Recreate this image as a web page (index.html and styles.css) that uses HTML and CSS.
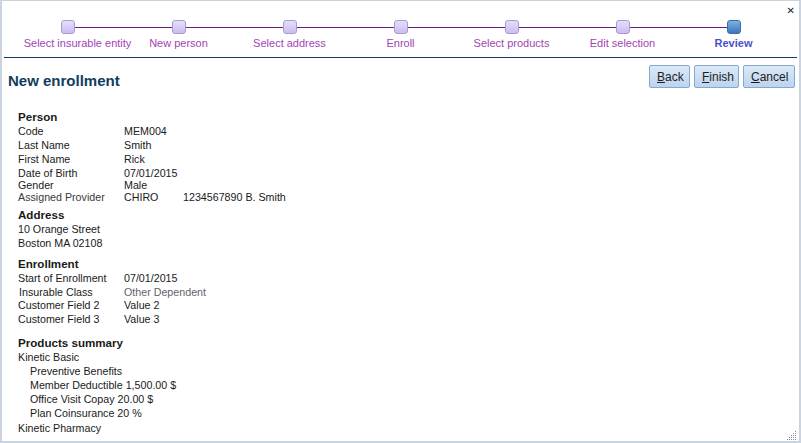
FILE: index.html
```html
<!DOCTYPE html>
<html>
<head>
<meta charset="utf-8">
<link rel="stylesheet" href="styles.css">
</head>
<body>
<div class="window">
  <div class="close">&#x2715;</div>
  <div class="steps">
    <div class="track"></div>
    <div class="step first"><span class="dot"></span><span class="lbl">Select insurable entity</span></div>
    <div class="step"><span class="dot"></span><span class="lbl">New person</span></div>
    <div class="step"><span class="dot"></span><span class="lbl">Select address</span></div>
    <div class="step"><span class="dot"></span><span class="lbl">Enroll</span></div>
    <div class="step"><span class="dot"></span><span class="lbl">Select products</span></div>
    <div class="step"><span class="dot"></span><span class="lbl">Edit selection</span></div>
    <div class="step current"><span class="dot"></span><span class="lbl">Review</span></div>
  </div>
  <div class="rule"></div>
  <div class="titlebar">
    <h1 class="title">New enrollment</h1>
    <div class="buttons">
      <button class="btn"><u>B</u>ack</button>
      <button class="btn"><u>F</u>inish</button>
      <button class="btn"><u>C</u>ancel</button>
    </div>
  </div>
  <div class="content">
    <div class="sec">Person</div>
    <div class="row h14"><span class="k">Code</span><span class="v">MEM004</span></div>
    <div class="row h14"><span class="k">Last Name</span><span class="v">Smith</span></div>
    <div class="row h14"><span class="k">First Name</span><span class="v">Rick</span></div>
    <div class="row h13"><span class="k">Date of Birth</span><span class="v">07/01/2015</span></div>
    <div class="row h12"><span class="k">Gender</span><span class="v">Male</span></div>
    <div class="row h12"><span class="k muted">Assigned Provider</span><span class="v short">CHIRO</span><span class="v">1234567890 B. Smith</span></div>

    <div class="sec s2">Address</div>
    <div class="row h14"><span>10 Orange Street</span></div>
    <div class="row h14"><span>Boston MA 02108</span></div>

    <div class="sec s3">Enrollment</div>
    <div class="row h14"><span class="k">Start of Enrollment</span><span class="v">07/01/2015</span></div>
    <div class="row h13"><span class="k ind1">Insurable Class</span><span class="v grey">Other Dependent</span></div>
    <div class="row h14"><span class="k">Customer Field 2</span><span class="v">Value 2</span></div>
    <div class="row h14"><span class="k">Customer Field 3</span><span class="v">Value 3</span></div>

    <div class="sec s4">Products summary</div>
    <div class="row h14"><span>Kinetic Basic</span></div>
    <div class="row h14 sub"><span>Preventive Benefits</span></div>
    <div class="row h14 sub"><span>Member Deductible 1,500.00 $</span></div>
    <div class="row h14 sub"><span>Office Visit Copay 20.00 $</span></div>
    <div class="row h14 sub"><span>Plan Coinsurance 20 %</span></div>
    <div class="row h15"><span>Kinetic Pharmacy</span></div>
  </div>
  <div class="grip">
    <svg width="12" height="12" viewBox="0 0 12 12">
      <g fill="#8a8a8a">
        <rect x="10" y="2" width="1" height="1"/>
        <rect x="8" y="4" width="1" height="1"/><rect x="10" y="4" width="1" height="1"/>
        <rect x="6" y="6" width="1" height="1"/><rect x="8" y="6" width="1" height="1"/><rect x="10" y="6" width="1" height="1"/>
        <rect x="4" y="8" width="1" height="1"/><rect x="6" y="8" width="1" height="1"/><rect x="8" y="8" width="1" height="1"/><rect x="10" y="8" width="1" height="1"/>
        <rect x="2" y="10" width="1" height="1"/><rect x="4" y="10" width="1" height="1"/><rect x="6" y="10" width="1" height="1"/><rect x="8" y="10" width="1" height="1"/><rect x="10" y="10" width="1" height="1"/>
      </g>
    </svg>
  </div>
</div>
</body>
</html>
```
FILE: styles.css
```css
html, body {
  margin: 0;
  padding: 0;
  background: #ffffff;
}
.window {
  position: relative;
  width: 801px;
  height: 443px;
  box-sizing: border-box;
  border: 2px solid #c9d4e0;
  border-top-width: 1px;
  background: #ffffff;
  font-family: "Liberation Sans", Arial, sans-serif;
  color: #1a1a1a;
  overflow: hidden;
}
.close {
  position: absolute;
  top: 4px;
  right: 4px;
  font-size: 10px;
  font-weight: bold;
  color: #222;
  font-family: "DejaVu Sans", sans-serif;
}
.steps {
  position: relative;
  display: flex;
  margin: 19px 0 0 10px;
  width: 777px;
  height: 37px;
}
.track {
  position: absolute;
  left: 56px;
  right: 56px;
  top: 7px;
  height: 1px;
  background: #6e1a80;
}
.step {
  position: relative;
  flex: 0 0 111px;
  min-width: 0;
  display: flex;
  flex-direction: column;
  align-items: center;
}
.dot {
  width: 12px;
  height: 12px;
  border: 1px solid #a99ad6;
  border-radius: 3px;
  background: linear-gradient(#e6def9, #cbbcf2);
  box-sizing: content-box;
}
.lbl {
  margin-top: 3px;
  font-size: 11px;
  color: #a244b2;
  white-space: nowrap;
}
.step.first .lbl {
  margin-left: 20px;
}
.step.current .dot {
  border-color: #3e6ea6;
  background: linear-gradient(#7fb0e2, #3a78be);
}
.step.current .lbl {
  color: #4a4fd2;
  font-weight: bold;
}
.rule {
  height: 1px;
  background: #14356c;
  margin: 0 2px 0 2px;
}
.titlebar {
  display: flex;
  justify-content: space-between;
  align-items: flex-start;
  padding: 7px 4px 0 6px;
}
.title {
  margin: 7px 0 0 0;
  font-size: 15px;
  font-weight: bold;
  color: #123c5c;
}
.buttons {
  display: flex;
  gap: 4px;
}
.btn {
  height: 23px;
  padding: 0 7px;
  border: 1px solid #84a8d0;
  border-radius: 2px;
  background: linear-gradient(#dce9f7, #bdd4ee);
  font-family: "Liberation Sans", Arial, sans-serif;
  font-size: 12px;
  color: #1e1e1e;
}
.btn:nth-child(1) { width: 41px; }
.btn:nth-child(2) { width: 45px; }
.btn:nth-child(3) { width: 52px; }
.content {
  padding: 20px 0 0 15px;
  font-size: 10.7px;
}
.sec {
  font-weight: bold;
  font-size: 11.6px;
  height: 15px;
  line-height: 15px;
  padding-left: 1px;
}
.s2 { margin-top: 4px; }
.s3 { margin-top: 6px; }
.s4 { margin-top: 9px; }
.row {
  display: flex;
  align-items: center;
  padding-left: 1px;
  white-space: nowrap;
}
.h15 { height: 15px; }
.h14 { height: 14px; }
.h13 { height: 13px; }
.h12 { height: 12px; }
.k {
  width: 106px;
}
.v.short {
  width: 59px;
}
.muted { color: #3a3a3a; }
.ind1 { padding-left: 1px; width: 105px; }
.grey { color: #62646c; }
.sub { padding-left: 13px; }
.grip {
  position: absolute;
  right: 2px;
  bottom: 2px;
  width: 12px;
  height: 12px;
}
```
